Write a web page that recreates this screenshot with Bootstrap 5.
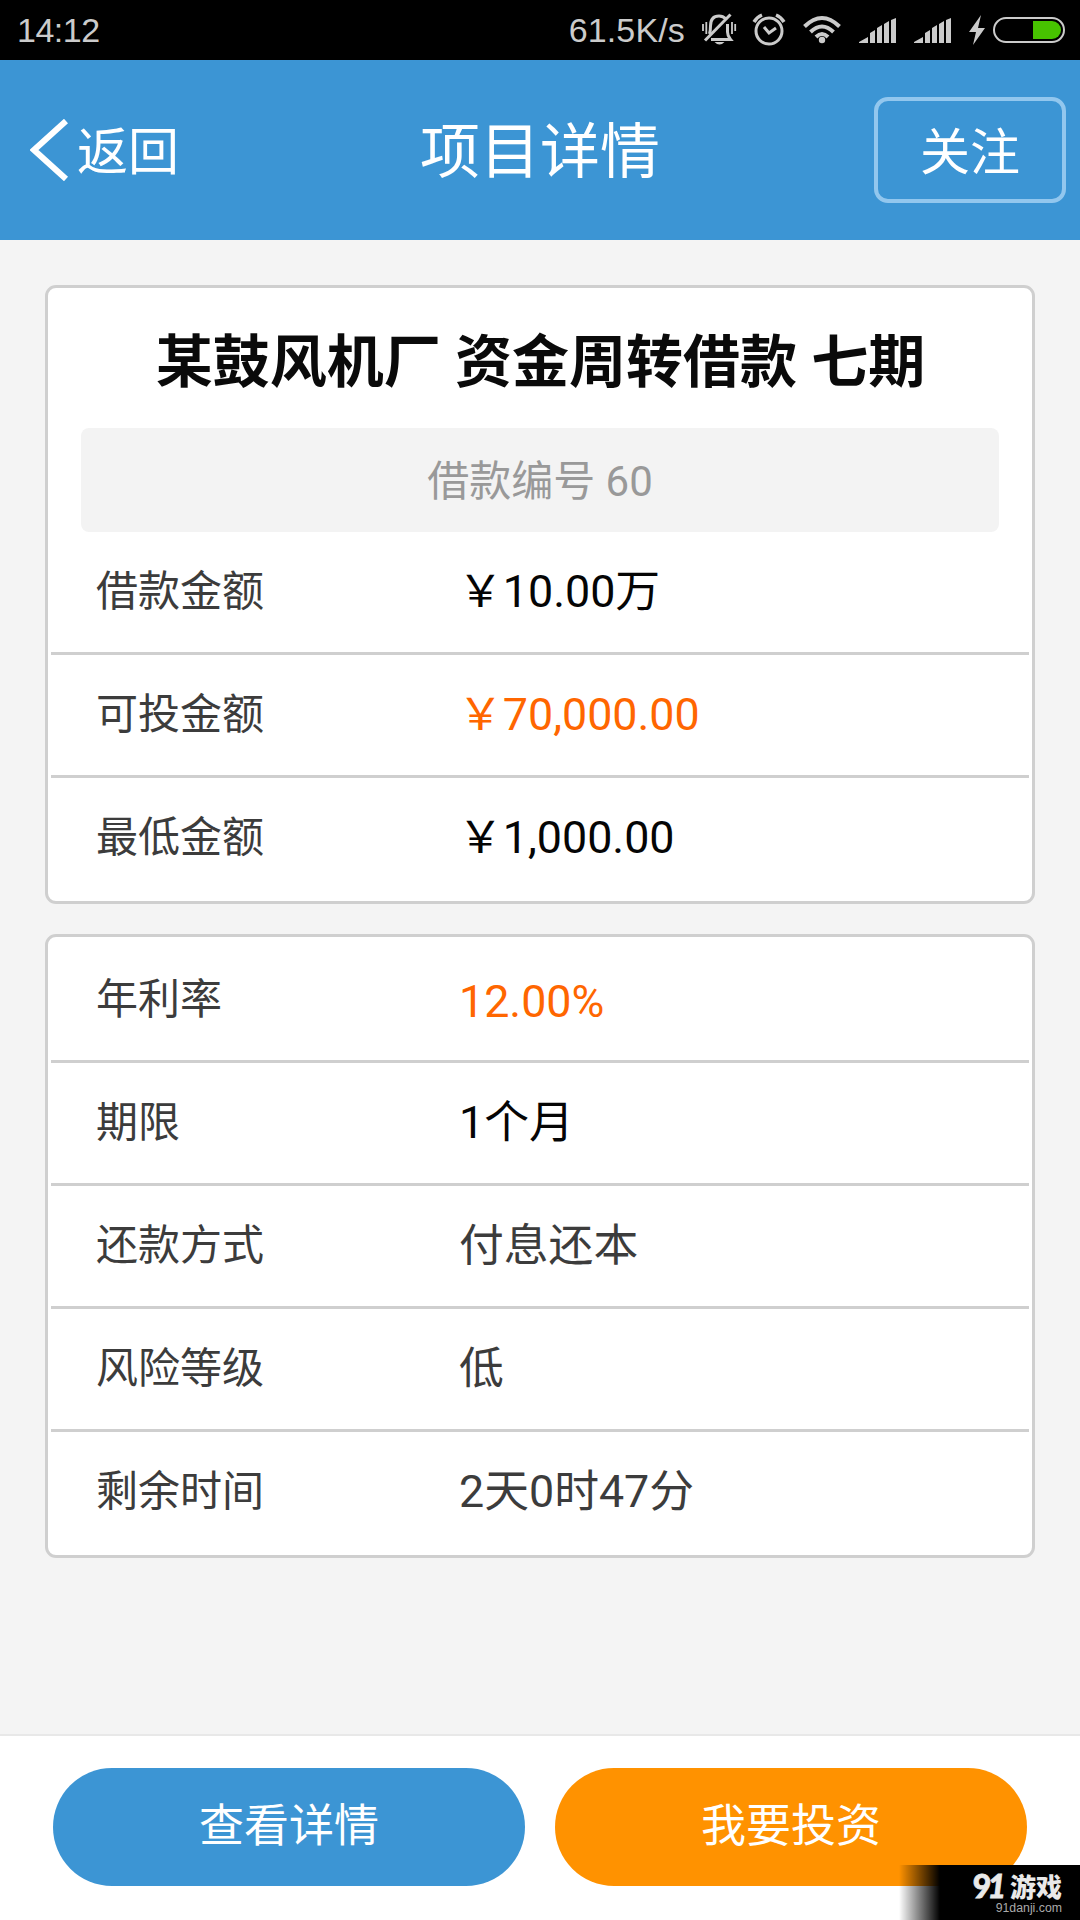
<!DOCTYPE html>
<html lang="zh-CN">
<head>
<meta charset="utf-8">
<meta name="viewport" content="width=device-width, initial-scale=1">
<title>项目详情</title>
<link href="https://cdn.jsdelivr.net/npm/bootstrap@5.3.0/dist/css/bootstrap.min.css" rel="stylesheet">
<style>
body{font-family:Roboto,"Noto Sans CJK SC",sans-serif;background:#f4f4f4;height:1920px;overflow:hidden}
.statusbar{height:60px;background:#000;color:#cbcbcb;font:34px/60px "Liberation Sans",sans-serif;padding:0 0 0 17px}
.statusbar svg{display:block;flex:none}
.clock{letter-spacing:-.5px}
.speed{margin-right:15px;letter-spacing:.15px}
.topbar{height:180px;background:#3c95d4;color:#fff;padding:0 14px 0 30px}
.topbar .side{flex:1 1 0}
.back-link{font-size:51px;line-height:60px;color:#fff;gap:8px}
.back-link span{padding-top:10px}
.back-link svg{margin-top:4px}
.page-title{font-size:60px;line-height:72px;padding:6px 16px 0 0}
.btn-follow{--bs-btn-color:#fff;--bs-btn-border-color:#92c7ee;width:192px;height:106px;border-width:4px;border-radius:14px;font-size:50px;line-height:60px;padding:5px 0 0}
.panel{border:3px solid #cfcfcf;border-radius:11px;padding:0 3px;background:#fff}
.first-panel{margin:45px 45px 30px;height:619px}
.second-panel{margin:0 45px;height:624px}
.loan-title{font-size:57px;line-height:68px;font-weight:700;color:#0a0a0a;padding:41px 0 31px 1px}
.loan-no{margin:0 30px;height:104px;border-radius:8px;background:#f3f3f3;color:#999;font-size:42px;line-height:100px;padding-top:4px}
.info-row{height:123px;padding:0 45px 1px;border-bottom:3px solid #cfcfcf;color:#3c3c3c;font-size:42px}
.info-row:last-child{border-bottom:0;padding-bottom:4px}
.info-row dt{width:362px;font-weight:400}
.info-row dd{font-size:44.8px}
.second-panel dt{width:363px}
.second-panel .info-row:first-child{height:126px;padding-top:1px;padding-bottom:0}
.second-panel .info-row:first-child dd{padding-top:6px}
.c-dark{color:#050505}
.c-orange{color:#ff6600}
.actionbar{height:186px;border-top:2px solid #e8e8e8;background:#fff;padding:32px 53px 0;gap:30px}
.btn-act{height:118px;font-size:45px;line-height:54px;border:0;color:#fff;flex:1 1 0;padding:0}
.bg-sky{background:#3c95d4}
.bg-amber{background:#ff9200}
.stamp{right:0;bottom:0;width:184px;height:55px;background:linear-gradient(90deg,rgba(0,0,0,0) 3px,#000 44px);color:#e9e9e9;padding:6px 18px 0 0}
.stamp-top{height:29px;gap:5px}
.stamp-name{font:900 26px/26px "Noto Sans CJK SC",sans-serif}
.stamp-num{font:900 32px/26px Lato,sans-serif;letter-spacing:-4px;padding-right:3px;-webkit-text-stroke:.8px #e9e9e9}
.stamp-url{font:12.3px/14px "Liberation Sans",sans-serif;color:#aaa;padding-top:1px}
</style>
<script src="https://cdn.jsdelivr.net/npm/bootstrap@5.3.0/dist/js/bootstrap.bundle.min.js"></script>
</head>
<body class="d-flex flex-column position-relative">
<div class="statusbar d-flex align-items-center">
  <span class="clock">14:12</span>
  <span class="speed ms-auto">61.5K/s</span>
  <svg width="380" height="60" viewBox="700 0 380 60" fill="none" stroke="#cbcbcb">
    <path d="M709.500 34q1-3 1-8 0-10 8.500-10 4 0 7 3" stroke-width="3"/>
    <path d="M727.500 24v8q0 4 3 7.500H711" stroke-width="3"/>
    <path d="M705 40.500L730.500 14.500" stroke-width="3"/>
    <path d="M703 24v7M735.200 24v7M706.300 22v12M732 22v12" stroke-width="1.800"/>
    <path d="M714.500 42h10q-5 5-10 0" fill="#cbcbcb" stroke="none"/>
    <circle cx="769" cy="31" r="13" stroke-width="3"/>
    <path d="M764 27l5 6 7-5" stroke-width="3"/>
    <path d="M754 22q3-5 8-7M776 15q5 2 8 7" stroke-width="3.500"/>
    <path d="M804.500 26.500q17.500-17 35 0M810.500 32q11.500-11 23 0M816 37q6-6 12 0" stroke-width="4"/>
    <circle cx="822" cy="40" r="3.200" fill="#cbcbcb" stroke="none"/>
    <g fill="#cbcbcb" stroke="none">
      <path id="sig" d="M859 43v-1l9-5v6zM870 33l5-3v13h-5zM877 28l5-3v18h-5zM884 24l5-3v22h-5zM891 20l5-2v25h-5z"/>
      <use href="#sig" x="55"/>
      <path d="M981 15l-12 17h7l-3 13 12-17h-7z"/>
    </g>
    <rect x="994" y="18" width="70" height="24" rx="12" stroke-width="2"/>
    <path d="M1033 21h19a9 9 0 0 1 0 18h-19z" fill="#47c300" stroke="none"/>
  </svg>
</div>
<header class="topbar d-flex align-items-center">
  <div class="side"><a href="#" class="back-link d-inline-flex align-items-center text-decoration-none">
    <svg width="39" height="62" viewBox="0 0 39 62" fill="none" stroke="#fff" stroke-width="6"><path d="M36 2L4 31l32 29"/></svg>
    <span>返回</span></a></div>
  <h1 class="page-title fw-normal m-0">项目详情</h1>
  <div class="side text-end"><button type="button" class="btn btn-follow">关注</button></div>
</header>
<main class="flex-grow-1">
  <section class="panel first-panel">
    <h2 class="loan-title text-center m-0">某鼓风机厂 资金周转借款 七期</h2>
    <div class="loan-no text-center">借款编号 60</div>
    <dl class="m-0">
      <div class="info-row d-flex align-items-center"><dt>借款金额</dt><dd class="m-0 c-dark">￥10.00万</dd></div>
      <div class="info-row d-flex align-items-center"><dt>可投金额</dt><dd class="m-0 c-orange">￥70,000.00</dd></div>
      <div class="info-row d-flex align-items-center"><dt>最低金额</dt><dd class="m-0 c-dark">￥1,000.00</dd></div>
    </dl>
  </section>
  <section class="panel second-panel">
    <dl class="m-0">
      <div class="info-row d-flex align-items-center"><dt>年利率</dt><dd class="m-0 c-orange">12.00%</dd></div>
      <div class="info-row d-flex align-items-center"><dt>期限</dt><dd class="m-0 c-dark">1个月</dd></div>
      <div class="info-row d-flex align-items-center"><dt>还款方式</dt><dd class="m-0">付息还本</dd></div>
      <div class="info-row d-flex align-items-center"><dt>风险等级</dt><dd class="m-0">低</dd></div>
      <div class="info-row d-flex align-items-center"><dt>剩余时间</dt><dd class="m-0">2天0时47分</dd></div>
    </dl>
  </section>
</main>
<footer class="actionbar d-flex">
  <button type="button" class="btn btn-act bg-sky rounded-pill">查看详情</button>
  <button type="button" class="btn btn-act bg-amber rounded-pill">我要投资</button>
</footer>
<div class="stamp position-absolute text-end">
  <div class="stamp-top d-flex justify-content-end align-items-center"><span class="stamp-num">9<i>1</i></span><span class="stamp-name">游戏</span></div>
  <div class="stamp-url">91danji.com</div>
</div>
</body>
</html>
